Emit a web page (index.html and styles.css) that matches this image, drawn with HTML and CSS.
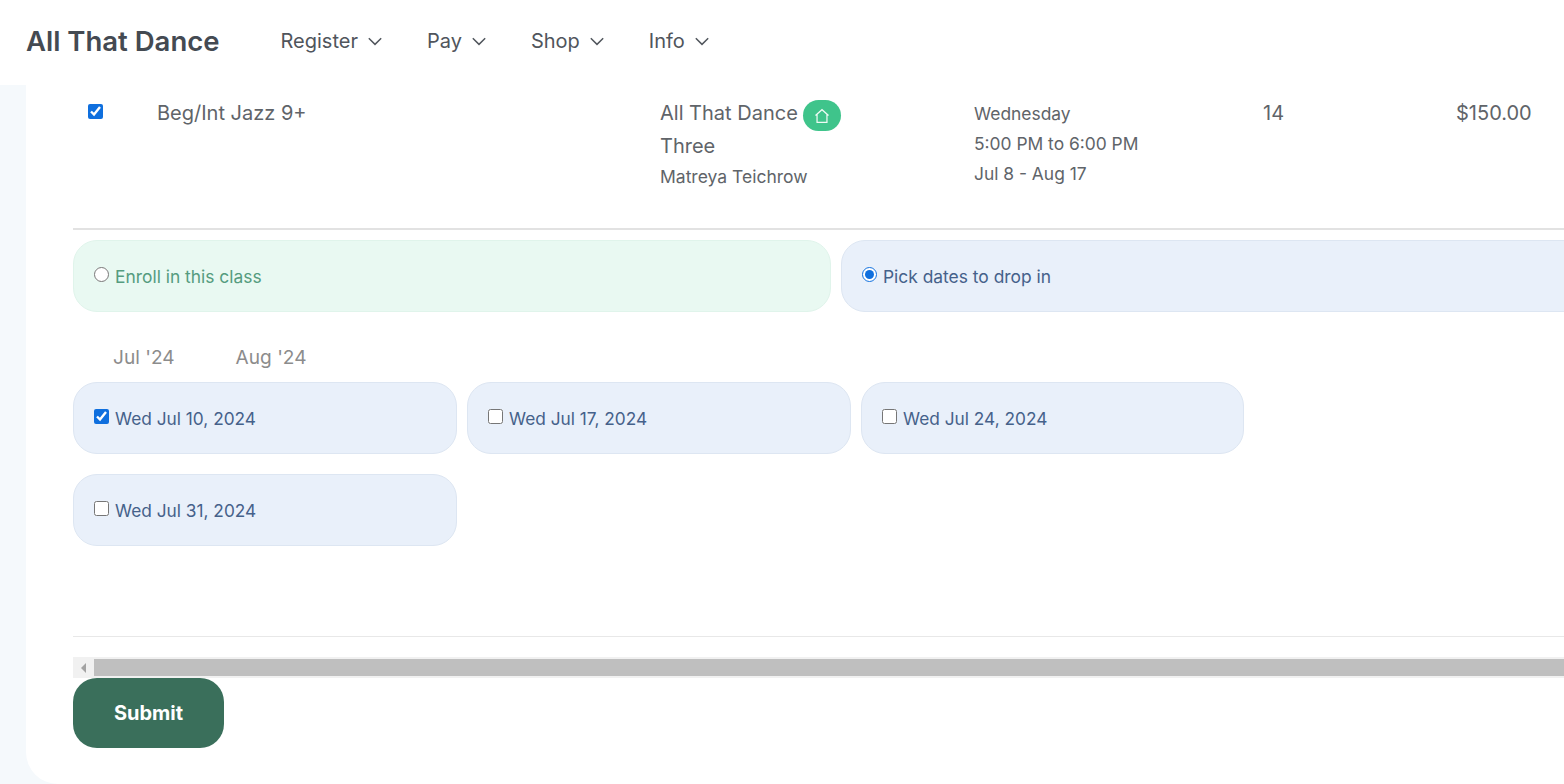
FILE: index.html
```html
<!DOCTYPE html>
<html lang="en">

<head>
    <meta charset="UTF-8">
    <meta name="viewport" content="width=device-width, initial-scale=1.0">
    <title>All That Dance</title>
    <link rel="stylesheet" href="styles.css">
</head>

<body>

    <header class="topbar">
        <a class="brand" href="#">All That Dance</a>
        <nav class="nav">
            <a class="nav-link" href="#">Register
                <svg class="chevron" viewBox="0 0 16 16"><path d="M2.5 5.5 8 11l5.5-5.5"/></svg>
            </a>
            <a class="nav-link" href="#">Pay
                <svg class="chevron" viewBox="0 0 16 16"><path d="M2.5 5.5 8 11l5.5-5.5"/></svg>
            </a>
            <a class="nav-link" href="#">Shop
                <svg class="chevron" viewBox="0 0 16 16"><path d="M2.5 5.5 8 11l5.5-5.5"/></svg>
            </a>
            <a class="nav-link" href="#">Info
                <svg class="chevron" viewBox="0 0 16 16"><path d="M2.5 5.5 8 11l5.5-5.5"/></svg>
            </a>
        </nav>
    </header>

    <main class="panel">
        <form class="scroller">
            <div class="class-row">
                <div class="cell-check"><input type="checkbox" checked></div>
                <div class="cell-name">Beg/Int Jazz 9+</div>
                <div class="cell-place">
                    <div class="place-name">All That Dance
                        <span class="home-badge">
                            <svg viewBox="0 0 16 16"><path d="M2.2 7.6 8 2.4l5.8 5.2M3.6 6.6v7h8.8v-7"/></svg>
                        </span>
                    </div>
                    <div class="place-name">Three</div>
                    <div class="teacher">Matreya Teichrow</div>
                </div>
                <div class="cell-time">
                    <div>Wednesday</div>
                    <div>5:00 PM to 6:00 PM</div>
                    <div>Jul 8 - Aug 17</div>
                </div>
                <div class="cell-count">14</div>
                <div class="cell-price">$150.00</div>
            </div>

            <div class="choices">
                <label class="choice choice-green"><input type="radio" name="mode"> Enroll in this class</label>
                <label class="choice choice-blue"><input type="radio" name="mode" checked> Pick dates to drop in</label>
            </div>

            <div class="months">
                <span class="month">Jul '24</span>
                <span class="month">Aug '24</span>
            </div>

            <div class="dates">
                <label class="choice choice-blue"><input type="checkbox" checked> Wed Jul 10, 2024</label>
                <label class="choice choice-blue"><input type="checkbox"> Wed Jul 17, 2024</label>
                <label class="choice choice-blue"><input type="checkbox"> Wed Jul 24, 2024</label>
                <label class="choice choice-blue"><input type="checkbox"> Wed Jul 31, 2024</label>
            </div>

            <hr class="end-line">

            <div class="scrollbar">
                <div class="scroll-btn"><span class="arrow-left"></span></div>
                <div class="scroll-thumb"></div>
            </div>

            <button class="submit" type="button">Submit</button>
        </form>
    </main>

</body>

</html>
```

FILE: styles.css
```css
/* Base Styles */
html,
body {
    height: 100%;
}

body {
    margin: 0;
    background: #f5f9fc;
    font-family: "Inter", "Liberation Sans", sans-serif;
    color: #606469;
    overflow: hidden;
    display: flex;
    flex-direction: column;
}

/* Top bar */
.topbar {
    height: 85px;
    flex: none;
    background: #fff;
    display: flex;
    align-items: center;
    padding-left: 26px;
    padding-bottom: 3px;
    box-sizing: border-box;
}

.brand {
    font-size: 27.5px;
    font-weight: 600;
    color: #444a52;
    text-decoration: none;
    margin-right: 61px;
}

.nav {
    display: flex;
    gap: 43px;
}

.nav-link {
    font-size: 20px;
    color: #50555c;
    text-decoration: none;
    display: flex;
    align-items: center;
    gap: 8px;
}

.chevron {
    width: 18px;
    height: 18px;
    fill: none;
    stroke: #50555c;
    stroke-width: 1.3;
}

/* Main panel */
.panel {
    flex: 1;
    margin-left: 26px;
    background: #fff;
    border-bottom-left-radius: 32px;
    overflow: hidden;
}

.scroller {
    width: 1600px;
    padding-left: 47px;
}

.class-row {
    display: grid;
    grid-template-columns: 84px 503px 314px 289px 193px 1fr;
    height: 145px;
    padding-top: 13px;
    box-sizing: border-box;
    border-bottom: 2px solid #e2e2e2;
    font-size: 20px;
}

.cell-check {
    padding-left: 15px;
}

.cell-check input {
    display: block;
    width: 15px;
    height: 15px;
    margin: 6px 0 0;
    accent-color: #0f6fde;
}

.cell-name,
.cell-count,
.cell-price {
    line-height: 30px;
}

.cell-place {
    margin-top: -1px;
}

.place-name {
    height: 33px;
    line-height: 33px;
    display: flex;
    align-items: center;
    gap: 5px;
}

.teacher {
    font-size: 17.5px;
    line-height: 28px;
}

.cell-time {
    font-size: 17.4px;
    line-height: 30px;
    margin-top: 1px;
}

.home-badge {
    width: 38px;
    height: 31px;
    margin-top: 4px;
    border-radius: 16px;
    background: #3fc48b;
    display: flex;
    align-items: center;
    justify-content: center;
}

.home-badge svg {
    width: 18px;
    height: 18px;
    fill: none;
    stroke: #eefaf4;
    stroke-width: 1.1;
}

/* Choices */
.choices {
    display: grid;
    grid-template-columns: 758px 758px;
    gap: 10px;
    margin-top: 10px;
}

.choice {
    height: 72px;
    box-sizing: border-box;
    border-radius: 24px;
    border: 1px solid;
    display: flex;
    align-items: center;
    gap: 6px;
    padding-left: 20px;
    font-size: 17.4px;
}

.choice input {
    width: 15px;
    height: 15px;
    margin: -4px 0 0;
    flex: none;
    accent-color: #0f6fde;
}

.choice-green {
    background: #e9f9f2;
    border-color: #e0f4eb;
    color: #559c7f;
}

.choice-blue {
    background: #e9f0fa;
    border-color: #dde6f2;
    color: #45618a;
}

/* Months */
.months {
    display: flex;
    gap: 61px;
    padding: 20px 0 0 40px;
    height: 70px;
    box-sizing: border-box;
    align-items: center;
    font-size: 19.1px;
    color: #8c8c8c;
}

.dates {
    display: grid;
    grid-template-columns: 384px 384px 383px;
    gap: 20px 10px;
}

.dates .choice {
    font-size: 17.3px;
}

.end-line {
    border: 0;
    border-top: 1px solid #e8e8e8;
    margin: 90px 0 0;
}

/* Scrollbar */
.scrollbar {
    margin-top: 20px;
    height: 21px;
    background: #f1f1f1;
    display: flex;
    align-items: center;
}

.scroll-btn {
    width: 21px;
    display: flex;
    justify-content: center;
}

.arrow-left {
    width: 0;
    height: 0;
    border-top: 5px solid transparent;
    border-bottom: 5px solid transparent;
    border-right: 5px solid #a3a3a3;
}

.scroll-thumb {
    flex: 1;
    height: 17px;
    background: #bfbfbf;
}

.submit {
    display: block;
    width: 151px;
    height: 70px;
    border: 0;
    border-radius: 24px;
    background: #3a6f5b;
    color: #fff;
    font-family: inherit;
    font-size: 20px;
    font-weight: 700;
}
```
